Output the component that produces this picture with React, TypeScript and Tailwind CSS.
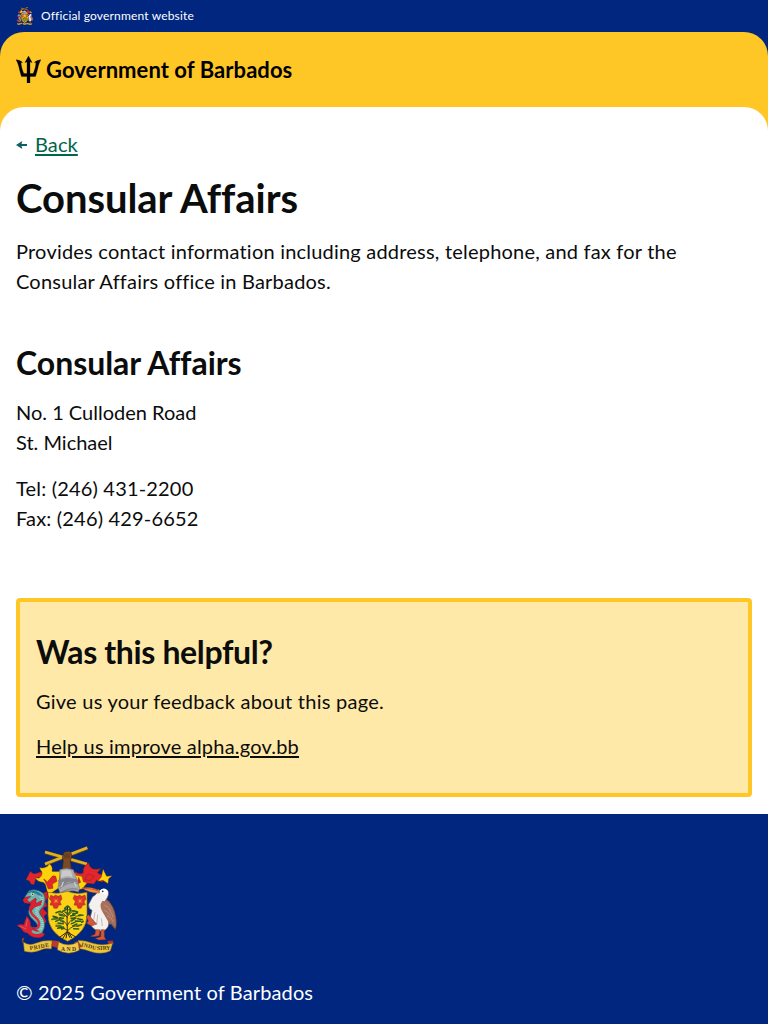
function CoatOfArms({ className }: { className: string }) {
  return (
    <svg viewBox="18 18 303 324" className={className} role="img" aria-label="Coat of arms of Barbados">
      {/* sugar canes and fist */}
      <g strokeLinecap="butt" fill="none">
        <path d="M105 37L231 73M105 73L232 24" stroke="#6b4a16" strokeWidth="11" />
        <path d="M105 36L231 72M105 72L232 23" stroke="#e3b021" strokeWidth="8" />
      </g>
      <path d="M160 42q2-8 9-7q8-4 14 3q4 8 1 15l-3 11l3 22h-27l3-24l-3-8z" fill="#7a4a26" stroke="#3f2715" strokeWidth="2" />
      <path d="M165 42v13M171 40v15M177 42v12" stroke="#3a2110" strokeWidth="1.5" />
      {/* mantling */}
      <g stroke="#6e2413" strokeWidth="1.2" strokeLinejoin="round">
        <path d="M48 119l13-25q8 11 21 5q14-6 25 1l-7 13l-22 0l-6 21l-9-2l-5-9z" fill="#e3262b" />
        <path d="M87 82q10 4 19 0q9-2 11-11q13 6 9 23q15 2 25-1l-4 50l-26 18l-8-1l-5-20q-2-14-15-14q-12-1-18-14q13 6 18-3q7-11 0-17q-4-4-4-10z" fill="#fdd20a" />
        <path d="M101 117q8 3 10 10l12-14q5-9 14-4l4 15l-14 8l2 13l-14 2l-7-17z" fill="#e3262b" />
        <path d="M196 95q14 10 24 3q-3-19 17-29q-1 10 10 17q11 4 26-1l-11 13q8 8 20 6l11 10l-17 12l-17-5l-7 11l-19-2l-13 11l-10-11l-20-2z" fill="#e3262b" />
        <path d="M190 99q7-1 9 7l17 3l4 16l11 3l-13 18l-18 5l-11-20zM279 87l11 22l16-2l-10 9l-2 15l-15-10l-16 3l11-13z" fill="#fdd20a" />
        <path d="M234 102l19 7l-12 13l-17-3zM206 112l6 15l-10 5z" fill="#e3262b" />
      </g>
      {/* helmet */}
      <path d="M149 89q21-9 41 0l9 25l10 31l-4 11q-26-10-53 7l-8-20l6-28z" fill="#aaa9ac" stroke="#6f6b74" strokeWidth="1.6" />
      <path d="M155 92q16-5 28 1l5 20q-15-9-35 1z" fill="#cbc9cb" />
      <path d="M144 120l27-7l30 5l5 8l-30-1l-28 17z" fill="#85848b" />
      <path d="M149 146q26-25 54-16M154 157q23-15 49-9" fill="none" stroke="#65636c" strokeWidth="2" />
      <path d="M160 125l-6 16M193 126l6 15" stroke="#c9c7c9" strokeWidth="4" />
      {/* shield */}
      <path d="M114 157q31 7 59-3q26 11 58 3v68q0 50-58 79q-59-27-59-80z" fill="#fdd116" stroke="#8c6a16" strokeWidth="2" />
      <g fill="#df332c" stroke="#7b2c1d" strokeWidth="1.2">
        <path d="M122 166l9 3l6-4l7 4l9-4l3 12l-6 8l4 9l-8 2l-4 9l-10 0l-4-9l-8-1l4-11l-6-8z" />
        <path d="M193 166l9 3l7-4l6 4l10-4l3 12l-6 8l4 9l-8 2l-5 9l-9 0l-4-9l-8-1l4-11l-7-8z" />
      </g>
      <g fill="#ef9a27">
        <path d="M133 176l5 4l6-4l-3 7l4 5l-7-2l-6 4l3-8zM205 176l5 4l6-4l-3 7l4 5l-7-2l-6 4l3-8z" />
      </g>
      {/* bearded fig tree */}
      <g fill="none" stroke="#302713" strokeLinecap="round">
        <path d="M173 199l-2 28l1 49l-4 18M173 277l6 15M171 276l-24 17M174 277l23 14M171 275l-13 21M176 276l9 17" strokeWidth="3" />
        <path d="M172 256q-14-24-41-24M172 256q13-25 40-32M173 271q-14-10-27-8M174 271q13-16 34-14M172 232q-12-17-25-18M173 228q12-14 20-16" strokeWidth="2.4" />
      </g>
      <g fill="none" stroke="#2b5e22" strokeWidth="4.5" strokeLinecap="round">
        <path d="M172 198l-8 7M175 199l7 8M170 207l-13 8M177 209l12 4M165 216l9 6M180 215l-6 8M151 214l-13 4M193 213l10 3M147 222l12 3M188 222l14-3M182 228l13-3M164 228l-14-2M160 235l-11-2M183 235l15 0M129 229l12 3M126 238l16-2M137 244l13-6M151 242l10 4M185 243l10-8M206 226l13 0M203 236l14 3M196 243l16 1M184 251l11-4M160 251l-16-2M153 258l-15 0M143 265l17-4M188 258l13-6M201 259l14-5M191 266l15 1M155 267l8-2M215 247l5-3" />
      </g>
      <g fill="none" stroke="#5d812a" strokeWidth="2" strokeLinecap="round">
        <path d="M160 211l-8 6M184 211l6 6M135 237l-9 3M205 231l8-4M151 253l-13-1M195 257l13-3M178 221l6-4M160 228l-7-4" />
      </g>
      {/* dolphin */}
      <path d="M85 166l26-12l4 18l-9 12l6 14l-13 7l13 15l-10 9l7 15l-10 17l-20-8z" fill="#d81f32" stroke="#631822" strokeWidth="1.5" />
      <path d="M45 170l12-18q14-6 29 0q22 7 19 30q-1 16-11 24q-9 8-3 18q15 16 13 33q-2 22-21 29q-15 5-29-9l-17-16l15-9l20 13q15 4 11-9q-3-8-13-16q-22-17-10-39l10-16l-18 5l-9-11z" fill="#6bb5ae" stroke="#27545d" strokeWidth="2" />
      <path d="M91 166q11 14-2 30q-16 16-5 31q18 17 11 35q-7 16-22 10" fill="none" stroke="#a3d7cb" strokeWidth="9" strokeDasharray="3 3" />
      <path d="M79 176q-11 10-14 20q-11 19 10 35q14 11 12 24q-2 13-20 10" fill="none" stroke="#dc293a" strokeWidth="7" />
      <path d="M48 171l15-2l-12 10l8 8l17-13l3 16l17-9l-4 15l-18 5l-11 13l-7-10l7-13l-20-2l-5-10z" fill="#dc2030" stroke="#731923" strokeWidth="1" />
      <path d="M55 159q8-7 19-5q16 5 23 16M66 156q12 0 23 10" fill="none" stroke="#2879a0" strokeWidth="4" />
      <circle cx="68" cy="163" r="4" fill="#f4e5a5" />
      <circle cx="68" cy="163" r="2.2" fill="#17333a" />
      <path d="M20 257q10-6 21-3l9-26q14 13 12 33l20 10l22 10q-2 10-15 12q-23 3-36-13q-14-2-18-13q-5-7-15-10z" fill="#d92435" stroke="#74192a" strokeWidth="1.5" />
      <path d="M66 273q15 11 30 1" stroke="#6bb5ae" strokeWidth="7" fill="none" />
      <path d="M52 237l-4 24M27 258l22 9" stroke="#f16b70" strokeWidth="2" fill="none" />
      {/* pelican */}
      <path d="M275 171q22 6 34 30q12 25 10 57l-3 11l-13-16l-13 1l-21-22q-18-16-18-37z" fill="#996655" stroke="#473035" strokeWidth="2" />
      <path d="M271 153q13-12 23 0q6 11-8 29q-7 8-6 18l5 20q15 22 10 38q-7 18-28 15q-27-6-28-34l7-28q-11-3-10-18l12-23q12-6 13-14l3-8z" fill="#f3f0ed" stroke="#635b64" strokeWidth="2" />
      <path d="M277 183q20-2 30 21q10 23 10 56l-17-17l-4 4l-17-29q-14-20-2-35z" fill="#a7705c" />
      <path d="M283 196q12 2 18 16M281 210q14 4 20 17M290 227q15 4 20 18M298 207q8 14 11 25" fill="none" stroke="#c99c86" strokeWidth="2" />
      <path d="M255 217l-5 28M263 224l-3 31M274 235l3 23" stroke="#aaa2a1" strokeWidth="2" />
      <path d="M270 154q-24-16-54-10q22 16 53 15z" fill="#f59a31" stroke="#8c482a" strokeWidth="1.5" />
      <path d="M220 145q25 0 49 9" stroke="#db4b2f" strokeWidth="3" fill="none" />
      <path d="M270 151q12-12 23 1q2 9-4 14q-11-9-20-8z" fill="#fff" />
      <circle cx="278" cy="154" r="2.6" fill="#202331" />
      <path d="M247 238l-11-14l-7 6l6 12l-5 8l14 8l16-6zM257 269h13l-2 18l-17 3l-10-1l14-6zM273 269h10v21l5 9l-22 1l-10-5l16-5z" fill="#d55638" stroke="#733028" strokeWidth="1.3" />
      {/* motto ribbon */}
      <g stroke="#80591b" strokeWidth="1.4" strokeLinejoin="round">
        <path d="M39 304l3-9q-10-4-3 15zM293 304l4 10l13-3l-2-9z" fill="#ce2532" />
        <path d="M40 306q17 13 39 3q21-9 48-7l-3 25q-19-4-37 5q-22 9-44 2zM204 301q22 0 45 9q26 8 59 0l-7 23q-27 12-58 2q-19-7-34-9z" fill="#edc43d" />
        <path d="M127 302l21 2l-5 19l-18-5zM204 305l-10 1l4 18l19-4z" fill="#c4352a" />
        <path d="M146 306q29 17 58 0l4 25q-34 18-66-2z" fill="#f2cb49" />
      </g>
      <g fill="#493b18" fontFamily="Liberation Serif, serif" fontWeight="700" fontSize="17">
        <text transform="translate(60 331) rotate(-11)" textLength="59">PRIDE</text>
        <text x="153" y="333" textLength="45">AND</text>
        <text transform="translate(213 318) rotate(15)" textLength="46">INDU</text>
        <text transform="translate(261 330) rotate(-2)" textLength="40">STRY</text>
      </g>
    </svg>
  );
}

function Trident() {
  return (
    <svg viewBox="0 0 25 27" className="h-[27px] w-[25px]" aria-hidden="true">
      <path
        d="M12.5 0L16.1 6.5L14 6V17.6H17.2C18.6 14.2 19.8 10.5 20 6.6L18.4 6.5C20 4.8 22.5 4.1 25 3.8C23.4 6.4 22.7 8.4 22 11.4C21.2 14.8 20.4 17.6 19.5 20.4H14V27H11V20.4H5.5C4.6 17.6 3.8 14.8 3 11.4C2.3 8.4 1.6 6.4 0 3.8C2.5 4.1 5 4.8 6.6 6.5L5 6.6C5.2 10.5 6.4 14.2 7.8 17.6H11V6L8.9 6.5Z"
        fill="#000"
        stroke="#000"
        strokeWidth="0.3"
      />
    </svg>
  );
}

function BackArrow() {
  return (
    <svg viewBox="0 0 11 8" className="mt-0.5 h-2 w-[11px]" aria-hidden="true">
      <path d="M0 4L6.3 0L5.5 3H11V5H5.5L6.3 8Z" fill="#0e5f64" />
    </svg>
  );
}

export default function App() {
  return (
    <div className="min-h-screen bg-[#00267f] font-['Lato','Liberation_Sans',sans-serif] text-[20px] leading-[30px] text-[#0b0c0c]">
      <div className="flex h-8 items-center gap-2 px-4 text-white">
        <CoatOfArms className="h-[18px] w-[17px]" />
        <span className="text-[12px] leading-[18px] tracking-[0.16px]">Official government website</span>
      </div>
      <div className="rounded-t-[24px] bg-[#ffc726]">
        <header className="flex h-[75px] items-center gap-[5px] px-4 text-black">
          <Trident />
          <span className="text-[22px] font-bold tracking-[0.06px]">Government of Barbados</span>
        </header>
        <main className="rounded-t-[24px] bg-white px-4 pt-[22px] pb-[17px]">
          <a className="flex items-center gap-2 text-[#00654a]">
            <BackArrow />
            <span className="tracking-[0.1px] underline decoration-2 underline-offset-2">Back</span>
          </a>
          <h1 className="mt-4 text-[40px] leading-[46px] font-bold tracking-[-0.05px]">Consular Affairs</h1>
          <p className="mt-[15px] tracking-[0.21px]">
            Provides contact information including address, telephone, and fax for the
            <br />
            Consular Affairs office in Barbados.
          </p>
          <h2 className="mt-12 text-[32px] leading-[38px] font-bold tracking-[-0.04px]">Consular Affairs</h2>
          <p className="mt-[15px]">
            No. 1 Culloden Road
            <br />
            St. Michael
          </p>
          <p className="mt-4 tracking-[0.18px]">
            Tel: (246) 431-2200
            <br />
            Fax: (246) 429-6652
          </p>
          <section className="mt-[65px] h-[199px] rounded-[4px] border-4 border-[#ffc726] bg-[#ffe9a8] px-4 pt-[31px]">
            <h2 className="text-[32px] leading-[38px] font-bold tracking-[-0.36px]">Was this helpful?</h2>
            <p className="mt-[15px] tracking-[0.25px]">Give us your feedback about this page.</p>
            <a className="mt-[15px] block tracking-[0.2px] underline decoration-2 underline-offset-2">
              Help us improve alpha.gov.bb
            </a>
          </section>
        </main>
      </div>
      <footer className="px-4 pt-8 pb-[17px] text-white">
        <CoatOfArms className="h-[108px] w-[101px]" />
        <p className="mt-[23px] tracking-[0.13px]">© 2025 Government of Barbados</p>
      </footer>
    </div>
  );
}
